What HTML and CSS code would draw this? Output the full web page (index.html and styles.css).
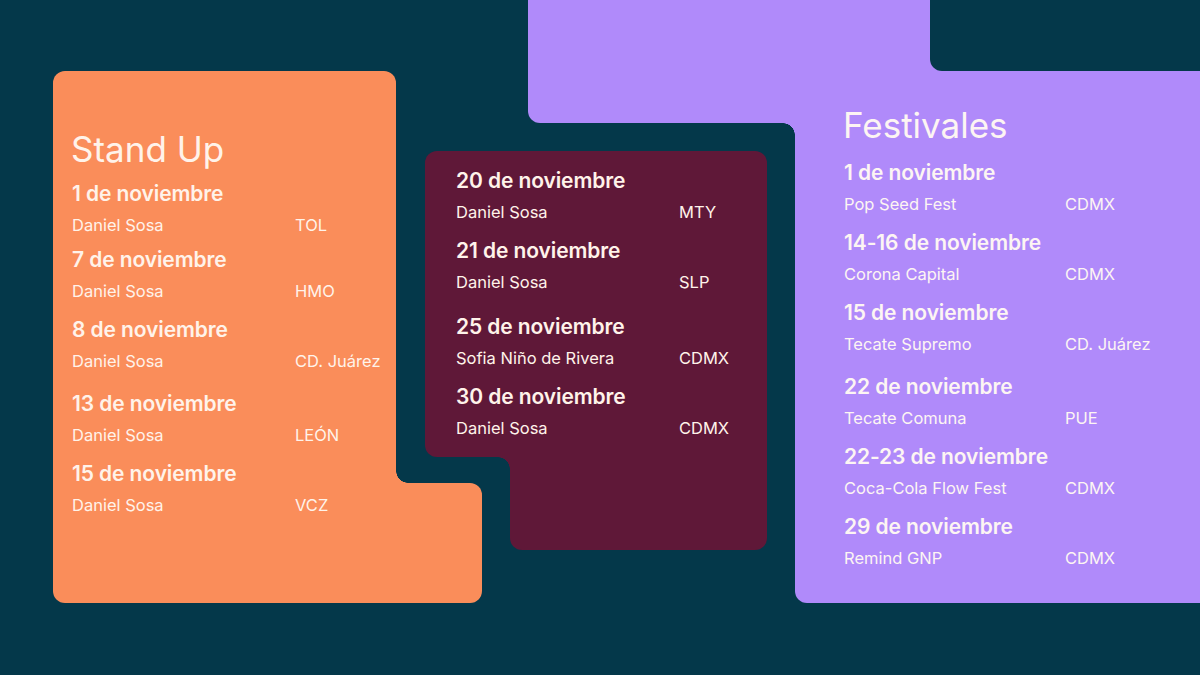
FILE: index.html
```html
<!DOCTYPE html>
<html lang="es">
<head>
<meta charset="utf-8">
<title>Agenda noviembre</title>
<link rel="stylesheet" href="styles.css">
</head>
<body>
<main class="canvas">
  <section class="panel standup">
    <span class="ext ext-standup"></span>
    <h2 class="title">Stand Up</h2>
    <div class="entry first">
      <div class="date">1 de noviembre</div>
      <div class="row"><span>Daniel Sosa</span><span>TOL</span></div>
    </div>
    <div class="entry tight">
      <div class="date">7 de noviembre</div>
      <div class="row"><span>Daniel Sosa</span><span>HMO</span></div>
    </div>
    <div class="entry">
      <div class="date">8 de noviembre</div>
      <div class="row"><span>Daniel Sosa</span><span>CD. Juárez</span></div>
    </div>
    <div class="entry loose">
      <div class="date">13 de noviembre</div>
      <div class="row"><span>Daniel Sosa</span><span>LEÓN</span></div>
    </div>
    <div class="entry">
      <div class="date">15 de noviembre</div>
      <div class="row"><span>Daniel Sosa</span><span>VCZ</span></div>
    </div>
  </section>

  <section class="panel shows">
    <span class="ext ext-shows"></span>
    <div class="entry first">
      <div class="date">20 de noviembre</div>
      <div class="row"><span>Daniel Sosa</span><span>MTY</span></div>
    </div>
    <div class="entry">
      <div class="date">21 de noviembre</div>
      <div class="row"><span>Daniel Sosa</span><span>SLP</span></div>
    </div>
    <div class="entry looser">
      <div class="date">25 de noviembre</div>
      <div class="row"><span>Sofia Niño de Rivera</span><span>CDMX</span></div>
    </div>
    <div class="entry">
      <div class="date">30 de noviembre</div>
      <div class="row"><span>Daniel Sosa</span><span>CDMX</span></div>
    </div>
  </section>

  <section class="panel fest">
    <span class="ext ext-fest"></span>
    <span class="notch"></span>
    <h2 class="title">Festivales</h2>
    <div class="entry first">
      <div class="date">1 de noviembre</div>
      <div class="row"><span>Pop Seed Fest</span><span>CDMX</span></div>
    </div>
    <div class="entry">
      <div class="date">14-16 de noviembre</div>
      <div class="row"><span>Corona Capital</span><span>CDMX</span></div>
    </div>
    <div class="entry">
      <div class="date">15 de noviembre</div>
      <div class="row"><span>Tecate Supremo</span><span>CD. Juárez</span></div>
    </div>
    <div class="entry loose">
      <div class="date">22 de noviembre</div>
      <div class="row"><span>Tecate Comuna</span><span>PUE</span></div>
    </div>
    <div class="entry">
      <div class="date">22-23 de noviembre</div>
      <div class="row"><span>Coca-Cola Flow Fest</span><span>CDMX</span></div>
    </div>
    <div class="entry">
      <div class="date">29 de noviembre</div>
      <div class="row"><span>Remind GNP</span><span>CDMX</span></div>
    </div>
  </section>
</main>
</body>
</html>
```

FILE: styles.css
```css
* { box-sizing: border-box; }

html, body {
  margin: 0;
  padding: 0;
  background: #04384a;
}

body {
  width: 1200px;
  height: 675px;
  overflow: hidden;
  font-family: Inter, "Liberation Sans", sans-serif;
  color: #fff3ea;
}

.canvas {
  display: grid;
  grid-template-columns: 53px 343px 29px 342px 28px 405px;
  grid-template-rows: 71px 80px 306px 146px 72px;
  width: 1200px;
  height: 675px;
}

.panel {
  position: relative;
  display: flex;
  flex-direction: column;
}

/* ---------- Stand Up (orange) ---------- */
.standup {
  grid-column: 2;
  grid-row: 2 / 5;
  background: #fa8d5a;
  border-radius: 12px 12px 0 12px;
  padding: 58px 0 0 19px;
}

.ext-standup {
  position: absolute;
  left: 100%;
  bottom: 0;
  width: 86px;
  height: 120px;
  background: #fa8d5a;
  border-radius: 0 12px 12px 0;
}

.ext-standup::after {
  content: "";
  position: absolute;
  left: 0;
  top: -12px;
  width: 12px;
  height: 12px;
  background: radial-gradient(circle at 100% 0, transparent 11.5px, #fa8d5a 12px);
}

/* ---------- Shows (maroon) ---------- */
.shows {
  grid-column: 4;
  grid-row: 3;
  background: #5f1838;
  border-radius: 12px 12px 0 12px;
  padding: 18px 0 0 31px;
}

.ext-shows {
  position: absolute;
  right: 0;
  top: 100%;
  width: 257px;
  height: 93px;
  background: #5f1838;
  border-radius: 0 0 12px 12px;
}

.ext-shows::after {
  content: "";
  position: absolute;
  left: -12px;
  top: 0;
  width: 12px;
  height: 12px;
  background: radial-gradient(circle at 0 100%, transparent 11.5px, #5f1838 12px);
}

/* ---------- Festivales (purple) ---------- */
.fest {
  grid-column: 6;
  grid-row: 1 / 5;
  background: #b08afa;
  border-radius: 0 0 0 12px;
  padding: 105px 0 0 49px;
  color: #fdf5f3;
}

.ext-fest {
  position: absolute;
  right: 100%;
  top: 0;
  width: 267px;
  height: 123px;
  background: #b08afa;
  border-radius: 0 0 0 12px;
}

.ext-fest::after {
  content: "";
  position: absolute;
  right: 0;
  top: 100%;
  width: 12px;
  height: 12px;
  background: radial-gradient(circle at 0 100%, transparent 11.5px, #b08afa 12px);
}

.notch {
  position: absolute;
  right: 0;
  top: 0;
  width: 270px;
  height: 71px;
  background: #04384a;
  border-radius: 0 0 0 12px;
}

/* ---------- Typography ---------- */
.title {
  margin: 0 0 0 -1px;
  font-size: 35px;
  line-height: 40px;
  font-weight: 400;
}

.entry { margin-top: 15px; }
.entry.first { margin-top: 13px; }
.fest .entry.first { margin-top: 16px; }
.shows .entry.first { margin-top: 0; }
.entry.tight { margin-top: 11px; }
.entry.loose { margin-top: 19px; }
.entry.looser { margin-top: 21px; }

.date {
  font-size: 21px;
  line-height: 24px;
  font-weight: 600;
  letter-spacing: -0.1px;
}

.row {
  display: grid;
  grid-template-columns: 223px auto;
  margin-top: 7px;
  font-size: 16.5px;
  line-height: 24px;
  font-weight: 400;
}

.fest .row { grid-template-columns: 221px auto; }
```
